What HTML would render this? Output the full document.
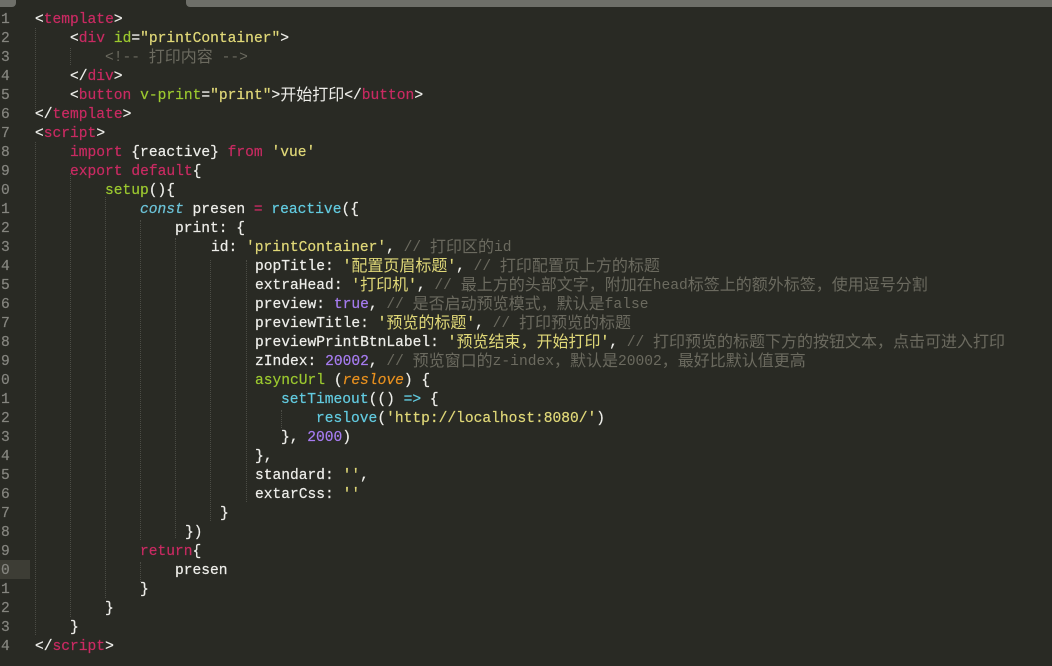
<!DOCTYPE html>
<html><head><meta charset="utf-8">
<style>
html,body{margin:0;padding:0;background:#292a24;}
#p{position:relative;width:1052px;height:666px;overflow:hidden;background:#292a24;font-family:"Liberation Mono","Noto Sans CJK SC",monospace;font-size:14.6px;color:#eeeeea;-webkit-text-stroke:0.2px;}
.l{position:absolute;white-space:pre;height:19px;line-height:19px;margin-top:1px;}
.n{position:absolute;left:1px;white-space:pre;height:19px;line-height:19px;margin-top:1px;color:#85857f;}
.z{font-family:"Noto Sans CJK SC",sans-serif;font-size:16px;line-height:0;-webkit-text-stroke:0;position:relative;top:1px;}
.r{color:#c92a62}.g{color:#9cc92f}.y{color:#e0d878}.c{color:#6b6a5f;-webkit-text-stroke:0;}.b{color:#62cbe0}.p{color:#a67cf0}.o{color:#e8901f;font-style:italic}
.t{color:#6cc3d8;font-style:italic}
.v{position:absolute;width:0;border-left:1px dotted #4b4c45;}
.tab{position:absolute;background:#6e6f69;}
</style></head><body><div id="p">
<div class="tab" style="left:0;top:0;width:16px;height:7px;border-radius:0 0 4px 0"></div>
<div class="tab" style="left:186px;top:0;width:866px;height:7px;border-radius:0 0 0 4px"></div>
<div style="position:absolute;left:0;top:560px;width:30px;height:19px;background:#3d3d35"></div>

<div class="v" style="left:35px;top:28px;height:85px"></div>
<div class="v" style="left:35px;top:142px;height:493px"></div>
<div class="v" style="left:70px;top:48px;height:17px"></div>
<div class="v" style="left:70px;top:173px;height:444px"></div>
<div class="v" style="left:105px;top:197px;height:401px"></div>
<div class="v" style="left:140px;top:220px;height:320px"></div>
<div class="v" style="left:140px;top:562px;height:20px"></div>
<div class="v" style="left:175px;top:238px;height:300px"></div>
<div class="v" style="left:210px;top:260px;height:261px"></div>
<div class="v" style="left:246px;top:260px;height:242px"></div>
<div class="v" style="left:281px;top:410px;height:18px"></div>

<div class="n" style="top:10px">1</div>
<div class="n" style="top:29px">2</div>
<div class="n" style="top:48px">3</div>
<div class="n" style="top:67px">4</div>
<div class="n" style="top:86px">5</div>
<div class="n" style="top:105px">6</div>
<div class="n" style="top:124px">7</div>
<div class="n" style="top:143px">8</div>
<div class="n" style="top:162px">9</div>
<div class="n" style="top:181px">0</div>
<div class="n" style="top:200px">1</div>
<div class="n" style="top:219px">2</div>
<div class="n" style="top:238px">3</div>
<div class="n" style="top:257px">4</div>
<div class="n" style="top:276px">5</div>
<div class="n" style="top:295px">6</div>
<div class="n" style="top:314px">7</div>
<div class="n" style="top:333px">8</div>
<div class="n" style="top:352px">9</div>
<div class="n" style="top:371px">0</div>
<div class="n" style="top:390px">1</div>
<div class="n" style="top:409px">2</div>
<div class="n" style="top:428px">3</div>
<div class="n" style="top:447px">4</div>
<div class="n" style="top:466px">5</div>
<div class="n" style="top:485px">6</div>
<div class="n" style="top:504px">7</div>
<div class="n" style="top:523px">8</div>
<div class="n" style="top:542px">9</div>
<div class="n" style="top:561px">0</div>
<div class="n" style="top:580px">1</div>
<div class="n" style="top:599px">2</div>
<div class="n" style="top:618px">3</div>
<div class="n" style="top:637px">4</div>

<div class="l" style="left:35px;top:10px">&lt;<span class="r">template</span>&gt;</div>
<div class="l" style="left:70px;top:29px">&lt;<span class="r">div</span> <span class="g">id</span>=<span class="y">"printContainer"</span>&gt;</div>
<div class="l c" style="left:105px;top:48px">&lt;!-- <span class="z">打印内容</span> --&gt;</div>
<div class="l" style="left:70px;top:67px">&lt;/<span class="r">div</span>&gt;</div>
<div class="l" style="left:70px;top:86px">&lt;<span class="r">button</span> <span class="g">v-print</span>=<span class="y">"print"</span>&gt;<span class="z">开始打印</span>&lt;/<span class="r">button</span>&gt;</div>
<div class="l" style="left:35px;top:105px">&lt;/<span class="r">template</span>&gt;</div>
<div class="l" style="left:35px;top:124px">&lt;<span class="r">script</span>&gt;</div>
<div class="l" style="left:70px;top:143px"><span class="r">import</span> {reactive} <span class="r">from</span> <span class="y">'vue'</span></div>
<div class="l" style="left:70px;top:162px"><span class="r">export</span> <span class="r">default</span>{</div>
<div class="l" style="left:105px;top:181px"><span class="g">setup</span>(){</div>
<div class="l" style="left:140px;top:200px"><span class="t">const</span> presen <span class="r">=</span> <span class="b">reactive</span>({</div>
<div class="l" style="left:175px;top:219px">print: {</div>
<div class="l" style="left:211px;top:238px">id: <span class="y">'printContainer'</span>, <span class="c">// <span class="z">打印区的</span>id</span></div>
<div class="l" style="left:255px;top:257px">popTitle: <span class="y">'<span class="z">配置页眉标题</span>'</span>, <span class="c">// <span class="z">打印配置页上方的标题</span></span></div>
<div class="l" style="left:255px;top:276px">extraHead: <span class="y">'<span class="z">打印机</span>'</span>, <span class="c">// <span class="z">最上方的头部文字，附加在</span>head<span class="z">标签上的额外标签，使用逗号分割</span></span></div>
<div class="l" style="left:255px;top:295px">preview: <span class="p">true</span>, <span class="c">// <span class="z">是否启动预览模式，默认是</span>false</span></div>
<div class="l" style="left:255px;top:314px">previewTitle: <span class="y">'<span class="z">预览的标题</span>'</span>, <span class="c">// <span class="z">打印预览的标题</span></span></div>
<div class="l" style="left:255px;top:333px">previewPrintBtnLabel: <span class="y">'<span class="z">预览结束，开始打印</span>'</span>, <span class="c">// <span class="z">打印预览的标题下方的按钮文本，点击可进入打印</span></span></div>
<div class="l" style="left:255px;top:352px">zIndex: <span class="p">20002</span>, <span class="c">// <span class="z">预览窗口的</span>z-index<span class="z">，默认是</span>20002<span class="z">，最好比默认值更高</span></span></div>
<div class="l" style="left:255px;top:371px"><span class="g">asyncUrl</span> (<span class="o">reslove</span>) {</div>
<div class="l" style="left:281px;top:390px"><span class="b">setTimeout</span>(() <span class="b">=&gt;</span> {</div>
<div class="l" style="left:316px;top:409px"><span class="b">reslove</span>(<span class="y">'http://localhost:8080/'</span>)</div>
<div class="l" style="left:281px;top:428px">}, <span class="p">2000</span>)</div>
<div class="l" style="left:255px;top:447px">},</div>
<div class="l" style="left:255px;top:466px">standard: <span class="y">''</span>,</div>
<div class="l" style="left:255px;top:485px">extarCss: <span class="y">''</span></div>
<div class="l" style="left:220px;top:504px">}</div>
<div class="l" style="left:185px;top:523px">})</div>
<div class="l" style="left:140px;top:542px"><span class="r">return</span>{</div>
<div class="l" style="left:175px;top:561px">presen</div>
<div class="l" style="left:140px;top:580px">}</div>
<div class="l" style="left:105px;top:599px">}</div>
<div class="l" style="left:70px;top:618px">}</div>
<div class="l" style="left:35px;top:637px">&lt;/<span class="r">script</span>&gt;</div>
</div></body></html>
